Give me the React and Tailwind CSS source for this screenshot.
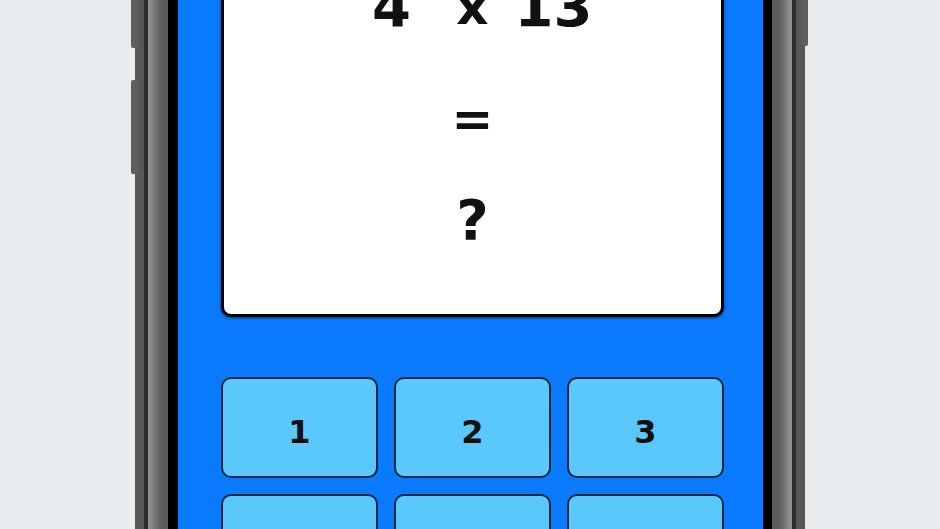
export default function App() {
  const keys = ['1', '2', '3', '4', '5', '6'];

  return (
    <div className="w-full h-[529px] overflow-hidden bg-[#e9ecef] flex justify-center font-['DejaVu_Sans',sans-serif]">
      <div className="relative mt-[-200px] w-[670px] h-[940px] shrink-0">
        {/* side buttons */}
        <div className="absolute left-[-4px] top-[160px] w-[7px] h-[88px] rounded-l-[2px] bg-[#5f5f5f]" />
        <div className="absolute left-[-4px] top-[280px] w-[7px] h-[94px] rounded-l-[2px] bg-[#5f5f5f]" />
        <div className="absolute right-[-3px] top-[150px] w-[6px] h-[96px] rounded-r-[2px] bg-[#5f5f5f]" />

        <div className="h-full rounded-[60px] bg-[#575757] p-[9px]">
          <div className="h-full rounded-[54px] bg-[#2e2e2e] p-[4px]">
            <div className="h-full rounded-[50px] bg-[#5c5c5c] p-[20px] shadow-[inset_7px_0_8px_rgba(255,255,255,0.35),inset_-7px_0_8px_rgba(255,255,255,0.35)]">
              <div className="h-full rounded-[32px] bg-black pl-[10px] pr-[9px] py-[10px]">
                <div className="h-full rounded-[24px] bg-[#0a7aff] pt-[69px] pl-[43px] pr-[39px]">
                  <div className="rounded-[10px] border-[3px] border-black bg-white pt-[40px] pb-[42px] shadow-[0_1px_3px_rgba(0,0,0,0.6)] flex flex-col items-center text-[56px] font-bold text-[#111] leading-[104px]">
                    <div className="grid grid-cols-3 w-[243px] text-center h-[112px]">
                      <span>4</span>
                      <span className="text-[50px]">x</span>
                      <span>13</span>
                    </div>
                    <div className="h-[101px] text-[50px]">=</div>
                    <div className="h-[104px]">?</div>
                  </div>

                  <div className="mt-[60px] grid grid-cols-3 gap-x-[16px] gap-y-[16px]">
                    {keys.map((k) => (
                      <button
                        key={k}
                        className="h-[101px] rounded-[10px] border-2 border-[#10263f] bg-[#5ac8fa] pt-[8px] text-[32px] font-bold text-[#111] flex items-center justify-center"
                      >
                        {k}
                      </button>
                    ))}
                  </div>
                </div>
              </div>
            </div>
          </div>
        </div>
      </div>
    </div>
  );
}
